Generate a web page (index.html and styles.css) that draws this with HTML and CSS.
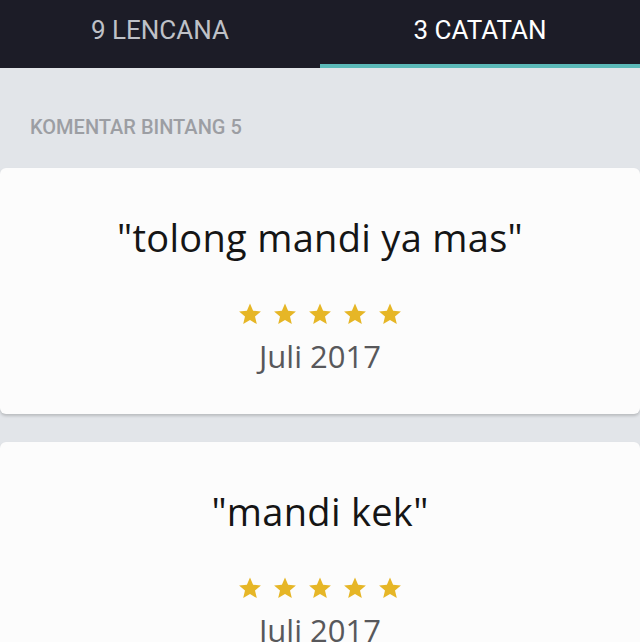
FILE: index.html
```html
<!DOCTYPE html>
<html lang="id">
<head>
    <meta charset="UTF-8">
    <meta name="viewport" content="width=device-width, initial-scale=1.0">
    <title>Catatan</title>
    <link rel="stylesheet" href="styles.css">
</head>
<body>
    <nav class="tabs">
        <div class="tab">9 LENCANA</div>
        <div class="tab active">3 CATATAN</div>
    </nav>

    <main class="notes">
        <h2 class="section-title">KOMENTAR BINTANG 5</h2>

        <div class="card">
            <p class="quote">"tolong mandi ya mas"</p>
            <div class="stars">
                <svg class="star" viewBox="0 0 24 24"><path d="M12 1.5l3.1 7.2 7.8.7-5.9 5.1 1.8 7.6L12 18.1l-6.8 4 1.8-7.6-5.9-5.1 7.8-.7z"/></svg>
                <svg class="star" viewBox="0 0 24 24"><path d="M12 1.5l3.1 7.2 7.8.7-5.9 5.1 1.8 7.6L12 18.1l-6.8 4 1.8-7.6-5.9-5.1 7.8-.7z"/></svg>
                <svg class="star" viewBox="0 0 24 24"><path d="M12 1.5l3.1 7.2 7.8.7-5.9 5.1 1.8 7.6L12 18.1l-6.8 4 1.8-7.6-5.9-5.1 7.8-.7z"/></svg>
                <svg class="star" viewBox="0 0 24 24"><path d="M12 1.5l3.1 7.2 7.8.7-5.9 5.1 1.8 7.6L12 18.1l-6.8 4 1.8-7.6-5.9-5.1 7.8-.7z"/></svg>
                <svg class="star" viewBox="0 0 24 24"><path d="M12 1.5l3.1 7.2 7.8.7-5.9 5.1 1.8 7.6L12 18.1l-6.8 4 1.8-7.6-5.9-5.1 7.8-.7z"/></svg>
            </div>
            <p class="date">Juli 2017</p>
        </div>

        <div class="card">
            <p class="quote">"mandi kek"</p>
            <div class="stars">
                <svg class="star" viewBox="0 0 24 24"><path d="M12 1.5l3.1 7.2 7.8.7-5.9 5.1 1.8 7.6L12 18.1l-6.8 4 1.8-7.6-5.9-5.1 7.8-.7z"/></svg>
                <svg class="star" viewBox="0 0 24 24"><path d="M12 1.5l3.1 7.2 7.8.7-5.9 5.1 1.8 7.6L12 18.1l-6.8 4 1.8-7.6-5.9-5.1 7.8-.7z"/></svg>
                <svg class="star" viewBox="0 0 24 24"><path d="M12 1.5l3.1 7.2 7.8.7-5.9 5.1 1.8 7.6L12 18.1l-6.8 4 1.8-7.6-5.9-5.1 7.8-.7z"/></svg>
                <svg class="star" viewBox="0 0 24 24"><path d="M12 1.5l3.1 7.2 7.8.7-5.9 5.1 1.8 7.6L12 18.1l-6.8 4 1.8-7.6-5.9-5.1 7.8-.7z"/></svg>
                <svg class="star" viewBox="0 0 24 24"><path d="M12 1.5l3.1 7.2 7.8.7-5.9 5.1 1.8 7.6L12 18.1l-6.8 4 1.8-7.6-5.9-5.1 7.8-.7z"/></svg>
            </div>
            <p class="date">Juli 2017</p>
        </div>
    </main>
</body>
</html>
```

FILE: styles.css
```css
* {
    margin: 0;
    padding: 0;
    box-sizing: border-box;
}

body {
    font-family: "Open Sans", Arial, sans-serif;
    background: #e2e5e9;
    height: 642px;
    overflow: hidden;
}

.tabs {
    display: flex;
    height: 68px;
    background: #1c1c27;
}

.tab {
    flex: 1;
    display: flex;
    align-items: center;
    justify-content: center;
    padding-bottom: 8px;
    font-family: Roboto, Arial, sans-serif;
    font-size: 26px;
    color: #bfc1c7;
}

.tab.active {
    color: #ffffff;
    border-bottom: 4px solid #5bb9b8;
    padding-bottom: 4px;
}

.section-title {
    padding: 47px 30px 29px;
    font-family: Roboto, Arial, sans-serif;
    font-size: 20px;
    font-weight: 500;
    line-height: 24px;
    color: #9c9ea3;
}

.card {
    background: #fcfcfc;
    border-radius: 6px;
    box-shadow: 0 2px 3px rgba(0, 0, 0, 0.18);
    padding: 45px 20px 40px;
    text-align: center;
    margin-bottom: 28px;
}

.quote {
    font-size: 38px;
    line-height: 48px;
    letter-spacing: 0.3px;
    color: #151515;
}

.stars {
    display: flex;
    justify-content: center;
    gap: 11px;
    margin-top: 41px;
}

.star {
    width: 24px;
    height: 24px;
    fill: #e6b626;
}

.date {
    margin-top: 12px;
    font-size: 31px;
    line-height: 36px;
    color: #58585b;
}
```
